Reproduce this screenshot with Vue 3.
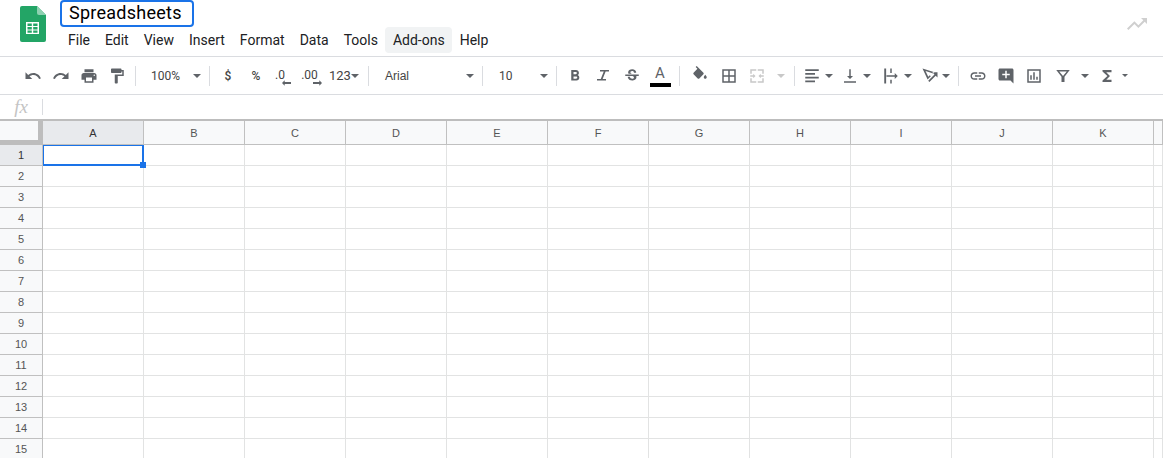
<script setup>
const menus = ['File', 'Edit', 'View', 'Insert', 'Format', 'Data', 'Tools', 'Add-ons', 'Help']
const icons = {
  undo: 'M12.5 8c-2.65 0-5.05.99-6.9 2.6L2 7v9h9l-3.62-3.62c1.39-1.16 3.16-1.88 5.12-1.88 3.54 0 6.55 2.31 7.6 5.5l2.37-.78C21.08 11.03 17.15 8 12.5 8z',
  redo: 'M18.4 10.6C16.55 8.99 14.15 8 11.5 8c-4.65 0-8.58 3.03-9.96 7.22L3.9 16c1.05-3.19 4.05-5.5 7.6-5.5 1.95 0 3.73.72 5.12 1.88L13 16h9V7l-3.6 3.6z',
  print: 'M19 8H5c-1.66 0-3 1.34-3 3v6h4v4h12v-4h4v-6c0-1.66-1.34-3-3-3zm-3 11H8v-5h8v5zm3-7c-.55 0-1-.45-1-1s.45-1 1-1 1 .45 1 1-.45 1-1 1zm-1-9H6v4h12V3z',
  paint: 'M18 4V3c0-.55-.45-1-1-1H5c-.55 0-1 .45-1 1v4c0 .55.45 1 1 1h12c.55 0 1-.45 1-1V6h1v4H9v11c0 .55.45 1 1 1h2c.55 0 1-.45 1-1v-9h8V4h-3z',
  bold: 'M15.6 10.79c.97-.67 1.65-1.77 1.65-2.79 0-2.26-1.75-4-4-4H7v14h7.04c2.09 0 3.71-1.7 3.71-3.79 0-1.52-.86-2.82-2.15-3.42zM10 6.5h3c.83 0 1.5.67 1.5 1.5s-.67 1.5-1.5 1.5h-3v-3zm3.500 9H10v-3h3.500c.83 0 1.500.67 1.500 1.500s-.67 1.500-1.500 1.500z',
  italic: 'M8 4v2h5L9 16H4v2h12v-2h-4.500l4-10H20V4z',
  strike: 'M6.85 7.08C6.85 4.37 9.45 3 12.24 3c1.64 0 3 .49 3.9 1.28.77.65 1.46 1.73 1.46 3.24h-3.010c0-.31-.05-.59-.15-.85-.29-.86-1.2-1.28-2.25-1.28-1.86 0-2.34 1.02-2.34 1.7 0 .48.25.88.74 1.21.38.25.77.48 1.41.7H7.39c-.21-.34-.54-.89-.54-1.92zM21 12v-2H3v2h9.620c1.150.45 1.960.75 1.960 1.970 0 1-.81 1.670-2.280 1.670-1.540 0-2.930-.54-2.930-2.510H6.400c0 .55.08 1.130.24 1.580.81 2.290 3.220 3.300 5.670 3.300 2.350 0 5.600-.98 5.600-4.570 0-.8-.08-1.310-.3-1.440H21z',
  fill: 'M16.56 8.94L7.62 0 6.21 1.41l2.38 2.38-5.15 5.15c-.59.59-.59 1.54 0 2.12l5.5 5.5c.29.29.68.44 1.06.44s.77-.15 1.06-.44l5.5-5.5c.59-.58.59-1.53 0-2.12zM19 11.5s-2 2.17-2 3.5c0 1.1.9 2 2 2s2-.9 2-2c0-1.33-2-3.5-2-3.5z',
  borders: 'M3 3v18h18V3H3zm8 16H5v-6h6v6zm0-8H5V5h6v6zm8 8h-6v-6h6v6zm0-8h-6V5h6v6z',
  merge: 'M3 3h8v2H5v4H3zM13 3h8v6h-2V5h-6zM3 15h2v4h6v2H3zM19 15h2v6h-8v-2h6zM3 11h4V9l3 3-3 3v-2H3zM21 11h-4V9l-3 3 3 3v-2h4z',
  align: 'M3 3h18v2.400H3zM3 8h13v2.400H3zM3 13h18v2.400H3zM3 18h13v2.400H3z',
  valign: 'M4 19h16v2H4zM13 3v9h3l-4 4-4-4h3V3z',
  wrap: 'M3 2h2.500v20H3zM11 2h2v6h-2zM11 17h2v5h-2zM6 11h11V8l4 4-4 4v-3H6z',
  rotate: 'M2 2l16 5-1.700 1.500L6 5.300l3.700 7.700 2-2 1.400 1.400-4.300 4.300zM22 7v7l-2.400-2.400-8.400 8.400-1.600-1.600 8.400-8.400L15 7z',
  link: 'M3.9 12c0-1.71 1.39-3.1 3.1-3.1h4V7H7c-2.76 0-5 2.24-5 5s2.24 5 5 5h4v-1.9H7c-1.71 0-3.1-1.39-3.1-3.1zM8 13h8v-2H8v2zm9-6h-4v1.9h4c1.71 0 3.1 1.39 3.1 3.1s-1.39 3.1-3.1 3.1h-4V17h4c2.76 0 5-2.24 5-5s-2.24-5-5-5z',
  comment: 'M21.99 4c0-1.1-.89-2-1.99-2H4c-1.1 0-2 .9-2 2v12c0 1.1.9 2 2 2h14l4 4-.01-18zM17 11h-4v4h-2v-4H7V9h4V5h2v4h4v2z',
  chart: 'M3 3v18h18V3H3zm16 16H5V5h14v14zM7 11h2v6H7zM11 7h2v10h-2zM15 13h2v4h-2z',
  filter: 'M3 4h18l-7 9v7h-4v-7L3 4zm4 2 5 6 5-6H7z',
  sigma: 'M18 4H6v2l6.5 6L6 18v2h12v-3h-7l5-5-5-5h7z'
}
const tools = [
  { w: 28, icon: 'undo' }, { w: 28, icon: 'redo' }, { w: 28, icon: 'print' }, { w: 28, icon: 'paint' },
  { sep: true, w: 8 },
  { w: 66, pad: 12, text: '100%', caretGap: 'auto', cls: 'dd' },
  { sep: true, w: 9 },
  { w: 28, text: '$', cls: 'sym' }, { w: 28, text: '%', cls: 'sym' },
  { w: 28, dec: '.0', dir: 'left' }, { w: 25, dec: '.00', dir: 'right' },
  { w: 41, pad: 6, text: '123', caret: 1, cls: 'num' },
  { sep: true, w: 8 },
  { w: 106, pad: 13, text: 'Arial', caretGap: 'auto', cls: 'dd font' },
  { sep: true, w: 8 },
  { w: 66, pad: 13, text: '10', caretGap: 'auto', cls: 'dd' },
  { sep: true, w: 9 },
  { w: 28, icon: 'bold' }, { w: 28, icon: 'italic' }, { w: 29, icon: 'strike' },
  { w: 28, color: true },
  { sep: true, w: 10 },
  { w: 31, icon: 'fill', cls: 'up' }, { w: 28, icon: 'borders' }, { w: 28, icon: 'merge', muted: true },
  { w: 19, pad: 6, caret: 1, muted: true },
  { sep: true, w: 8 },
  { w: 41, pad: 5, icon: 'align', caret: 1, gap: 4 },
  { w: 40, pad: 2, icon: 'valign', caret: 1, gap: 4 },
  { w: 39, pad: 3, icon: 'wrap', caret: 1, gap: 4 },
  { w: 34, pad: 3, icon: 'rotate', caret: 1, gap: 3 },
  { sep: true, w: 12 },
  { w: 28, icon: 'link' }, { w: 28, icon: 'comment' }, { w: 28, icon: 'chart' },
  { w: 45, pad: 6, icon: 'filter', caret: 1, gap: 9 },
  { w: 36, pad: 5, icon: 'sigma', caret: 1, gap: 6, small: true }
]
const cols = ['A', 'B', 'C', 'D', 'E', 'F', 'G', 'H', 'I', 'J', 'K', '']
const rows = Array.from({ length: 15 }, (_, i) => i + 1)
</script>

<template>
  <div class="page">
    <header class="head">
      <svg class="logo" width="26" height="36" viewBox="0 0 26 36">
        <path d="M2 0h15l9 9v25a2 2 0 0 1-2 2H2a2 2 0 0 1-2-2V2a2 2 0 0 1 2-2z" fill="#23a566" />
        <path d="M17 0l9 9h-7a2 2 0 0 1-2-2z" fill="#8ed1b1" />
        <path d="M6 16h13v12H6z" fill="#fff" />
        <path d="M7.500 17.500h4.300v2.500H7.500zM13.200 17.500h4.300v2.500h-4.300zM7.500 21h4.300v2.500H7.500zM13.200 21h4.300v2.500h-4.300zM7.500 24.500h4.300v2.200H7.500zM13.200 24.500h4.300v2.200h-4.300z" fill="#23a566" />
      </svg>
      <div class="titles">
        <div class="title">Spreadsheets</div>
        <nav class="menu">
          <span v-for="m in menus" :key="m" class="menu-item" :class="{ hot: m === 'Add-ons' }">{{ m }}</span>
        </nav>
      </div>
      <svg class="trend" width="24" height="24" viewBox="0 0 24 24"><path d="M16 6l2.290 2.290-4.880 4.880-4-4L2 16.590 3.410 18l6-6 4 4 6.300-6.290L22 12V6z" fill="#cfcfcf" /></svg>
    </header>

    <div class="toolbar">
      <template v-for="(t, i) in tools" :key="i">
        <div v-if="t.sep" class="sep" :style="{ width: t.w + 'px' }"><i></i></div>
        <div v-else class="tool" :class="[t.cls, { muted: t.muted, start: t.pad !== undefined }]"
          :style="{ width: t.w + 'px', paddingLeft: (t.pad || 0) + 'px' }">
          <svg v-if="t.icon" class="ico" viewBox="0 0 24 24" width="18" height="18"><path :d="icons[t.icon]" fill-rule="evenodd" /></svg>
          <span v-if="t.text">{{ t.text }}</span>
          <span v-if="t.dec" class="dec" :class="t.dir">{{ t.dec }}
            <svg class="arrow" :class="t.dir" width="9" height="6" viewBox="0 0 10 6"><path d="M3 0v2h7v2H3v2L0 3z" fill="#5f6368" /></svg>
          </span>
          <span v-if="t.color" class="color"><span>A</span><b></b></span>
          <i v-if="t.caret" class="caret" :class="{ small: t.small }" :style="{ marginLeft: (t.gap || 0) + 'px' }"></i>
          <i v-if="t.caretGap" class="caret push"></i>
        </div>
      </template>
    </div>

    <div class="formula">
      <span class="fx">fx</span>
      <i class="fx-sep"></i>
    </div>

    <div class="grid">
      <div class="corner"></div>
      <div v-for="(c, i) in cols" :key="c" class="col" :class="{ on: i === 0 }">{{ c }}</div>
      <template v-for="r in rows" :key="r">
        <div class="row" :class="{ on: r === 1 }">{{ r }}</div>
        <div v-for="(c, i) in cols" :key="c" class="cell"></div>
      </template>
      <div class="selection"><i></i></div>
    </div>
  </div>
</template>

<style>
html, body { margin: 0; background: #fff; overflow: hidden; }
</style>

<style scoped>
.page { width: 1163px; height: 458px; overflow: hidden; font-family: Roboto, "Liberation Sans", sans-serif; color: #3c4043; background: #fff; }
.head { height: 56px; display: flex; border-bottom: 1px solid #dadce0; position: relative; }
.logo { margin: 6px 0 0 20px; }
.titles { margin-left: 14px; }
.title { box-sizing: border-box; width: 134px; height: 27px; border: 2px solid #1a73e8; border-radius: 4px; padding-left: 7px; font-size: 18px; line-height: 22px; letter-spacing: .25px; color: #000; }
.menu { display: flex; height: 26px; align-items: center; margin-left: .5px; }
.menu-item { font-size: 14px; line-height: 26px; padding: 0 7.5px; border-radius: 4px; color: #202124; }
.menu-item.hot { background: #f1f3f4; }
.trend { position: absolute; right: 14px; top: 12px; }

.toolbar { height: 38px; box-sizing: border-box; display: flex; align-items: center; padding-left: 19px; border-bottom: 1px solid #dadce0; }
.tool { height: 28px; box-sizing: border-box; display: flex; align-items: center; justify-content: center; font-size: 12px; color: #444; flex: none; }
.tool.start { justify-content: flex-start; }
.ico { fill: #5f6368; flex: none; }
.up .ico { margin-top: -2px; }
.muted .ico { fill: #c8c8c8; }
.sep { height: 20px; flex: none; display: flex; justify-content: center; }
.sep i { width: 1px; background: #dadce0; }
.caret { width: 0; height: 0; border: 4px solid transparent; border-top-color: #5f6368; border-bottom: 0; flex: none; }
.caret.small { border-width: 3px; border-bottom: 0; }
.muted .caret { border-top-color: #c8c8c8; }
.dd { padding-right: 4px; }
.push { margin-left: auto; }
.sym { font-size: 12px; font-weight: 500; }
.font { font-family: "Liberation Sans", Arial, sans-serif; font-size: 12px; }
.num { font-size: 13px; }
.dec { position: relative; font-size: 12px; font-weight: 400; line-height: 14px; margin-top: -1px; }
.dec.left { margin-left: -8px; }
.dec.right { margin-left: -2px; }
.arrow { position: absolute; top: 12px; }
.arrow.left { right: -6px; }
.arrow.right { right: -4px; transform: scaleX(-1); }
.color { display: flex; flex-direction: column; align-items: center; font-size: 15px; line-height: 17px; color: #5f6368; }
.color b { width: 21px; height: 4px; background: #000; margin-top: 1px; }

.formula { height: 24px; display: flex; align-items: center; }
.fx { width: 42px; text-align: center; font-family: "Liberation Serif", serif; font-style: italic; font-size: 19px; color: #c4c4c4; flex: none; }
.fx-sep { width: 1px; height: 16px; background: #dadce0; }

.grid { position: relative; display: grid; grid-template-columns: 43px repeat(11, 101px) 9px; grid-template-rows: 24px repeat(15, 21px); border-top: 2px solid #bdbdbd; }
.corner { background: #f8f9fa; box-sizing: border-box; border-right: 5px solid #bdbdbd; border-bottom: 5px solid #bdbdbd; }
.col, .row { background: #f8f9fa; color: #555; font-family: "Liberation Sans", sans-serif; font-size: 11px; display: flex; align-items: center; justify-content: center; box-sizing: border-box; border-right: 1px solid #c0c0c0; border-bottom: 1px solid #c0c0c0; }
.col:last-of-type { border-right: 0; }
.on { background: #e8eaed; color: #333; }
.cell { box-sizing: border-box; border-right: 1px solid #e2e3e3; border-bottom: 1px solid #e2e3e3; }
.selection { position: absolute; left: 43px; top: 24px; width: 101px; height: 21px; box-sizing: border-box; border: 2px solid #1a73e8; border-width: 1px 2px 2px 1px; pointer-events: none; }
.selection i { position: absolute; right: -4px; bottom: -4px; width: 6px; height: 6px; background: #1a73e8; }
</style>
